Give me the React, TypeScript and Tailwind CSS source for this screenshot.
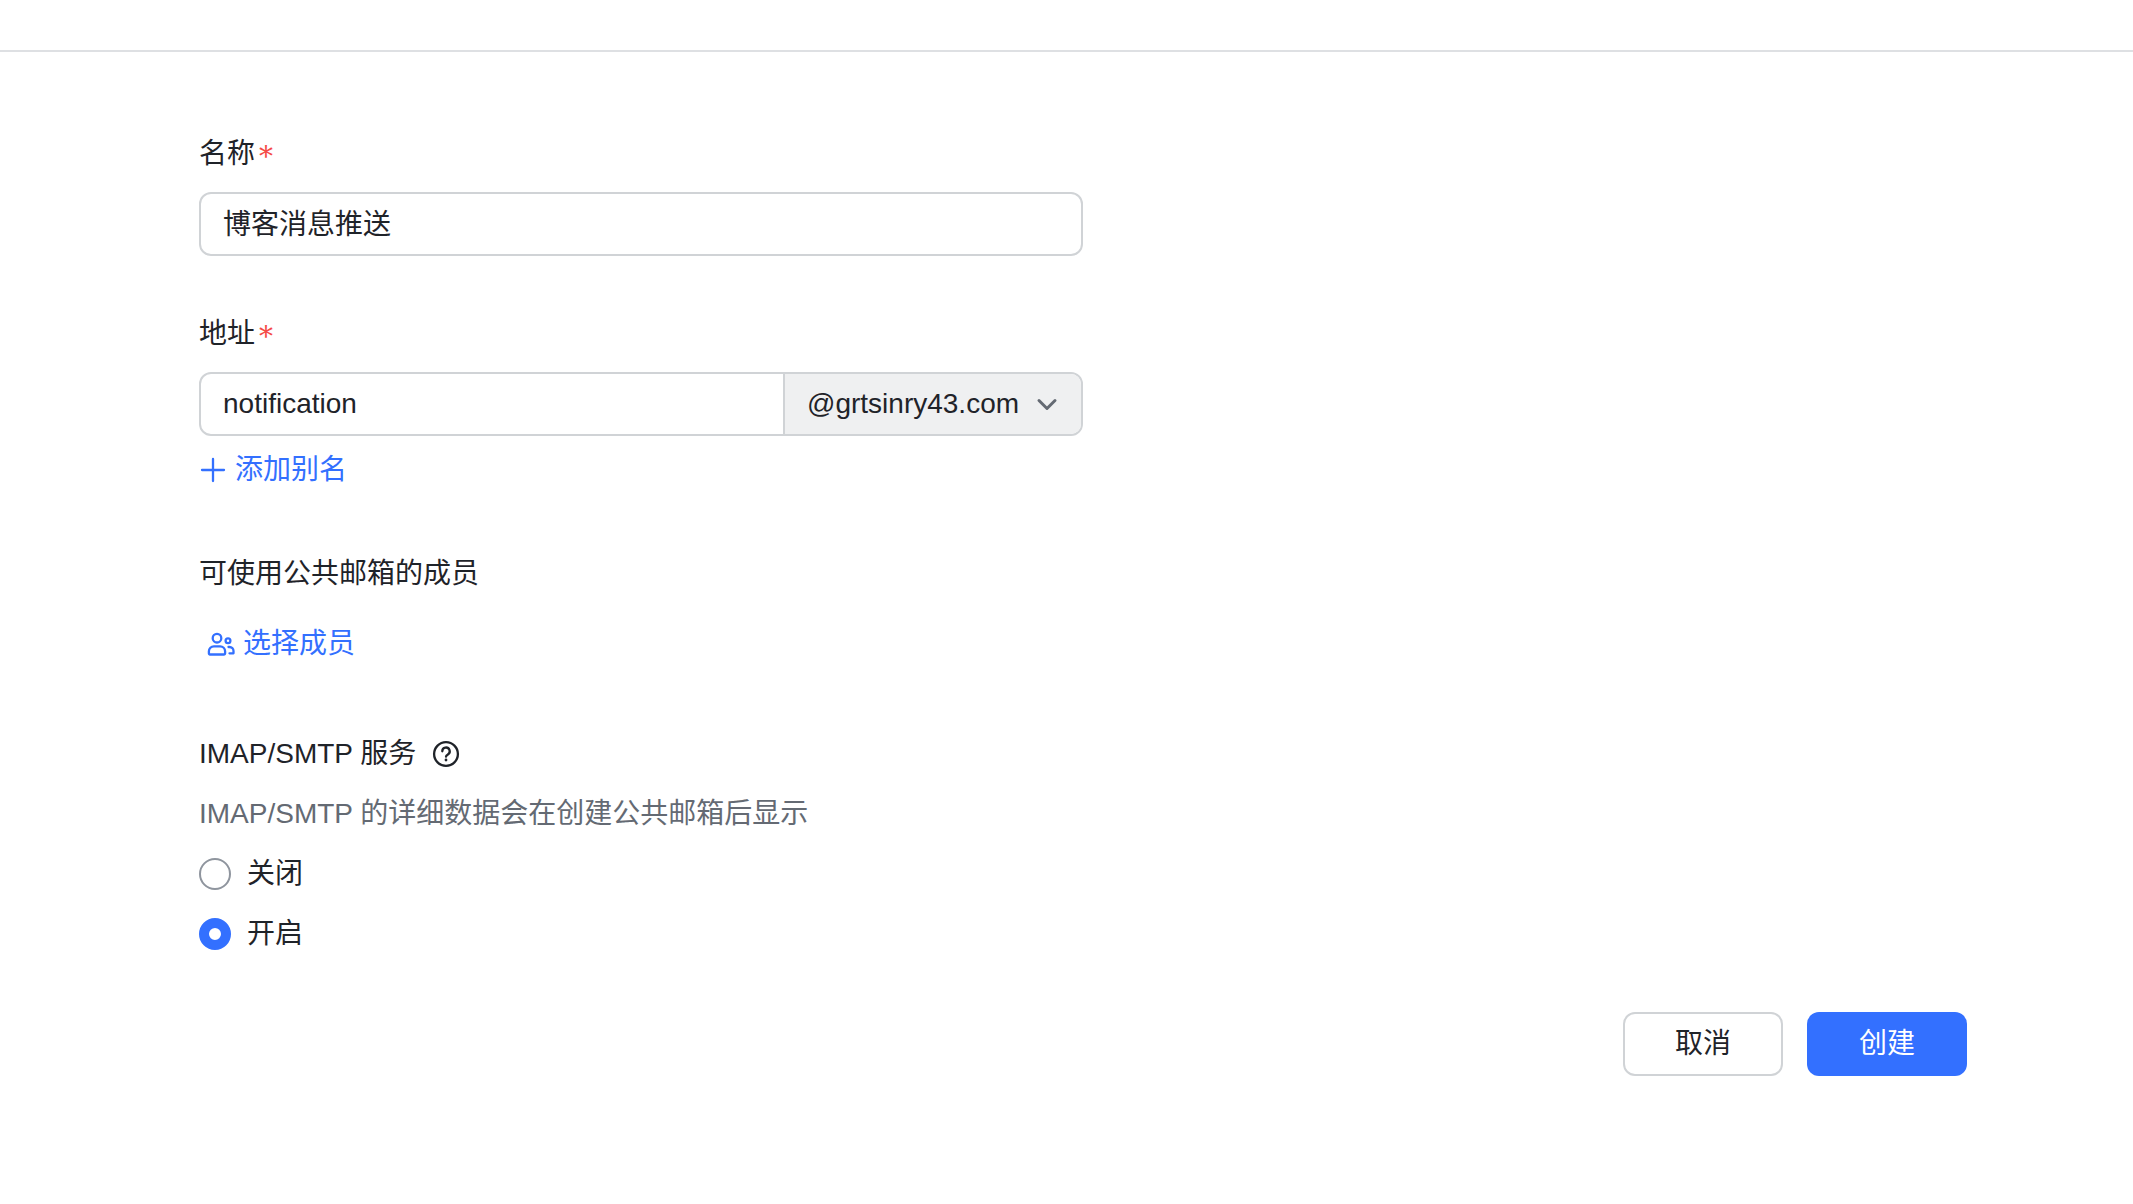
import { useState } from 'react';

const IMAP_OPTIONS = [
  { value: 'off', label: '关闭' },
  { value: 'on', label: '开启' },
];

function RequiredMark() {
  return (
    <span aria-hidden="true" className="ml-1 pt-1.5 font-['DejaVu_Serif'] text-[28px] text-[#f54a45]">
      *
    </span>
  );
}

function MembersIcon() {
  return (
    <svg className="h-7 w-7" fill="none" stroke="currentColor" strokeWidth={2.3} viewBox="0 0 28 28">
      <circle cx="10" cy="8.2" r="4.3" />
      <path strokeLinejoin="round" d="M1.9 23.5v-2.2a5 5 0 0 1 5-5h6.2a5 5 0 0 1 5 5v2.2a1 1 0 0 1-1 1H2.9a1 1 0 0 1-1-1z" />
      <circle cx="21" cy="10.8" r="2.4" />
      <path strokeLinecap="round" strokeLinejoin="round" d="M21.5 17h1a4 4 0 0 1 4 4v2.3h-4" />
    </svg>
  );
}

export default function App() {
  const [name, setName] = useState('博客消息推送');
  const [address, setAddress] = useState('notification');
  const [imap, setImap] = useState('on');

  return (
    <div className="min-h-screen bg-white font-['Liberation_Sans','Noto_Sans_CJK_SC',sans-serif] text-[28px] leading-[44px] text-[#1f2329]">
      {/* Top bar */}
      <header className="h-[52px] border-b-2 border-[#dee0e3]" />

      <form className="pt-20 pr-[166px] pl-[199px]" onSubmit={(e) => e.preventDefault()}>
        <div className="w-1/2">
          {/* Name */}
          <div className="mb-14">
            <label htmlFor="name" className="flex h-11 items-center">
              名称
              <RequiredMark />
            </label>
            <input
              id="name"
              value={name}
              onChange={(e) => setName(e.target.value)}
              className="mt-4 block h-16 w-full rounded-xl border-2 border-[#d0d3d6] px-[22px] pb-1 outline-none focus:border-[#3370ff]"
            />
          </div>

          {/* Address */}
          <div className="mb-[60px]">
            <label htmlFor="address" className="flex h-11 items-center">
              地址
              <RequiredMark />
            </label>
            <div className="mt-4 flex h-16 overflow-hidden rounded-xl border-2 border-[#d0d3d6]">
              <input
                id="address"
                value={address}
                onChange={(e) => setAddress(e.target.value)}
                className="min-w-0 flex-1 px-[22px] outline-none"
              />
              <div className="relative border-l-2 border-[#d0d3d6] bg-[#eff0f1]">
                <select aria-label="域名" className="h-full appearance-none pr-[61px] pl-[22px] outline-none">
                  <option>@grtsinry43.com</option>
                </select>
                <svg
                  className="pointer-events-none absolute top-[18px] right-[22px] h-6 w-6 text-[#646a73]"
                  fill="none"
                  stroke="currentColor"
                  viewBox="0 0 24 24"
                >
                  <path strokeLinecap="round" strokeLinejoin="round" strokeWidth={3} d="M4 8.5l8 8 8-8" />
                </svg>
              </div>
            </div>
            <button type="button" className="mt-3 flex items-center gap-2 text-[#3370ff]">
              <svg className="h-7 w-7" fill="none" stroke="currentColor" viewBox="0 0 28 28">
                <path strokeLinecap="round" strokeWidth={2.3} d="M14 3v22M3 14h22" />
              </svg>
              添加别名
            </button>
          </div>

          {/* Members */}
          <div className="mb-[66px]">
            <h2>可使用公共邮箱的成员</h2>
            <button type="button" className="mt-[26px] flex items-center gap-2 px-2 text-[#3370ff]">
              <MembersIcon />
              选择成员
            </button>
          </div>

          {/* IMAP/SMTP */}
          <fieldset>
            <legend className="flex items-center gap-4">
              IMAP/SMTP 服务
              <svg className="h-7 w-7" fill="none" stroke="currentColor" viewBox="0 0 28 28">
                <circle cx="14" cy="14" r="11.9" strokeWidth={2.3} />
                <path strokeLinecap="round" strokeWidth={2.3} d="M10.3 11.3a3.7 3.7 0 1 1 5.6 3.1c-1.2.7-1.9 1.3-1.9 2.3" />
                <circle cx="14" cy="20" r="1.4" fill="currentColor" stroke="none" />
              </svg>
            </legend>
            <p className="mt-4 text-[#646a73]">IMAP/SMTP 的详细数据会在创建公共邮箱后显示</p>
            {IMAP_OPTIONS.map((option) => (
              <label key={option.value} className="mt-4 flex items-center gap-4">
                <input
                  type="radio"
                  name="imap"
                  value={option.value}
                  checked={imap === option.value}
                  onChange={() => setImap(option.value)}
                  className="h-8 w-8 appearance-none rounded-full border-2 border-[#8f959e] checked:border-[10px] checked:border-[#3370ff]"
                />
                {option.label}
              </label>
            ))}
          </fieldset>
        </div>

        {/* Actions */}
        <div className="mt-14 flex justify-end gap-6 pb-14">
          <button type="button" className="h-16 w-40 rounded-xl border-2 border-[#d0d3d6]">
            取消
          </button>
          <button type="submit" className="h-16 w-40 rounded-xl bg-[#3370ff] text-white">
            创建
          </button>
        </div>
      </form>
    </div>
  );
}
